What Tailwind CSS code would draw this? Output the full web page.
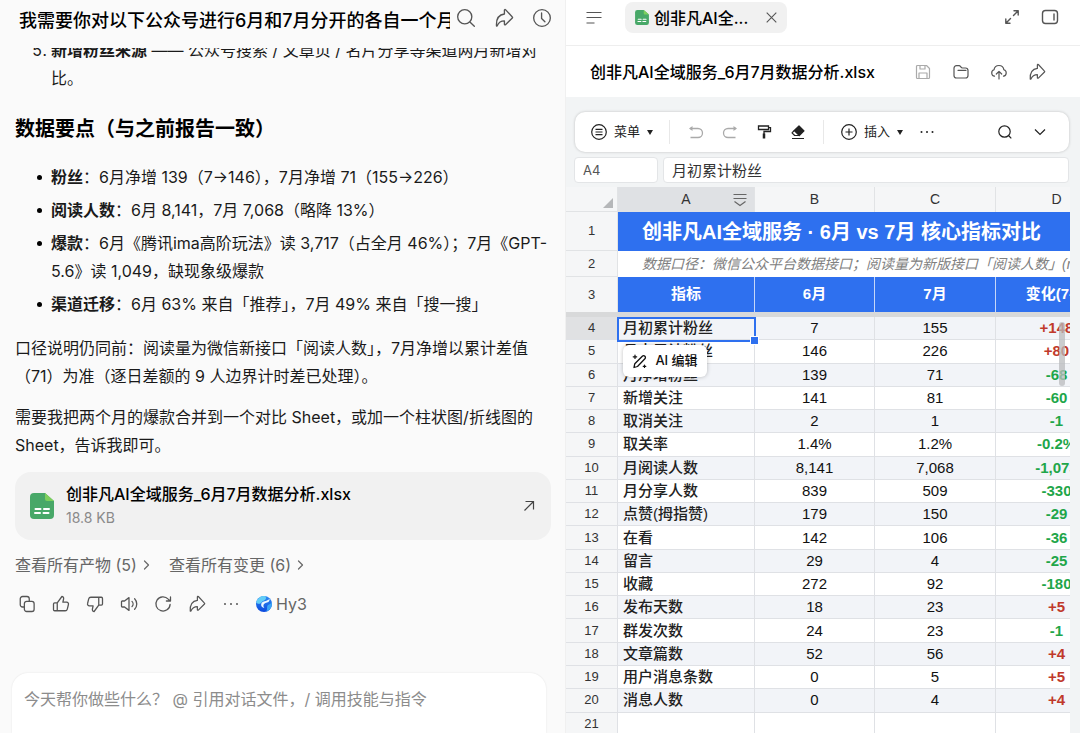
<!DOCTYPE html>
<html lang="zh-CN">
<head>
    <meta charset="UTF-8">
    <meta name="viewport" content="width=device-width, initial-scale=1.0">
    <title>创非凡AI全域服务_6月7月数据分析.xlsx</title>
    <script src="https://cdn.jsdelivr.net/npm/@tailwindcss/browser@4"></script>
</head>
<body class="font-['Inter','Noto_Sans_CJK_SC',sans-serif] text-[#1a1a1a] bg-[#fafafa]">
    <!-- 公用图标 -->
    <svg class="hidden" aria-hidden="true">
        <symbol id="i-share" viewBox="0 0 24 24" fill="none" stroke="currentColor" stroke-width="1.6" stroke-linecap="round" stroke-linejoin="round"><path d="M12.500 2.500v4.700C6 8 2.500 13 3 21.500c.3 .3 .7 .2 .9-.2 1.700-4 4.300-5.800 8.600-5.800v4c0 .7 .8 1 1.300 .6L22 12c.4-.4 .4-.8 0-1.200L13.800 2c-.5-.5-1.300-.2-1.300 .5z"/></symbol>
        <symbol id="i-search" viewBox="0 0 24 24" fill="none" stroke="currentColor" stroke-width="1.6" stroke-linecap="round"><circle cx="10.500" cy="10.500" r="8.500"/><path d="M17 17l5 5"/></symbol>
        <symbol id="i-right" viewBox="0 0 24 24" fill="none" stroke="currentColor" stroke-width="2.400" stroke-linecap="round" stroke-linejoin="round"><path d="M7 4l8 8-8 8"/></symbol>
        <symbol id="i-sheet" viewBox="0 0 24 26"><path d="M4 0h11l9 8v14a4 4 0 0 1-4 4H4a4 4 0 0 1-4-4V4a4 4 0 0 1 4-4z" fill="#48a868"/><path d="M15 0l9 8h-7a2 2 0 0 1-2-2z" fill="#7dd05c"/><path d="M5.500 16h5M14 16h5M5 20h5M13.500 20h5" stroke="#fff" stroke-width="2" stroke-linecap="round"/></symbol>
    </svg>

    <div class="h-screen grid grid-cols-[565fr_515fr] overflow-hidden">
        <!-- 左侧对话 -->
        <main class="flex flex-col min-w-0 overflow-hidden">
            <header class="h-12 shrink-0 flex items-start pt-1 pl-[19px] pr-[13px]">
                <h1 class="flex-1 min-w-0 overflow-hidden whitespace-nowrap text-[18px] leading-[34px] font-medium text-black">我需要你对以下公众号进行6月和7月分开的各自一个月数据分析</h1>
                <div class="flex gap-[18px] pl-[6px] pt-1 text-[#555]">
                    <button aria-label="搜索"><svg class="size-5"><use href="#i-search"/></svg></button>
                    <button aria-label="分享"><svg class="size-5"><use href="#i-share"/></svg></button>
                    <button aria-label="历史"><svg class="size-5" viewBox="0 0 24 24" fill="none" stroke="currentColor" stroke-width="1.6" stroke-linecap="round" stroke-linejoin="round"><circle cx="12" cy="12" r="10"/><path d="M11.500 6v6.500l4 4"/></svg></button>
                </div>
            </header>

            <section class="flex-1 min-h-0 overflow-hidden pl-[15px] pr-[14px] text-[16px] leading-[28px] whitespace-nowrap">
                <ol start="5" class="list-decimal pl-9 -mt-3">
                    <li><strong class="font-bold">新增粉丝来源</strong> —— 公众号搜索 / 文章页 / 名片分享等渠道两月新增对<br>比。</li>
                </ol>
                <h2 class="mt-[23px] text-[20px] font-bold text-black">数据要点（与之前报告一致）</h2>
                <ul class="mt-5 pl-9 flex flex-col gap-[5px]">
                    <li class="relative before:absolute before:-left-[14px] before:top-[12px] before:size-[5px] before:rounded-full before:bg-black"><strong class="font-bold">粉丝</strong>：6月净增 139（7→146），7月净增 71（155→226）</li>
                    <li class="relative before:absolute before:-left-[14px] before:top-[12px] before:size-[5px] before:rounded-full before:bg-black"><strong class="font-bold">阅读人数</strong>：6月 8,141，7月 7,068（略降 13%）</li>
                    <li class="relative before:absolute before:-left-[14px] before:top-[12px] before:size-[5px] before:rounded-full before:bg-black"><strong class="font-bold">爆款</strong>：6月《腾讯ima高阶玩法》读 3,717（占全月 46%）；7月《GPT-<br>5.6》读 1,049，缺现象级爆款</li>
                    <li class="relative before:absolute before:-left-[14px] before:top-[12px] before:size-[5px] before:rounded-full before:bg-black"><strong class="font-bold">渠道迁移</strong>：6月 63% 来自「推荐」，7月 49% 来自「搜一搜」</li>
                </ul>
                <p class="mt-4">口径说明仍同前：阅读量为微信新接口「阅读人数」，7月净增以累计差值<br>（71）为准（逐日差额的 9 人边界计时差已处理）。</p>
                <p class="mt-[13px]">需要我把两个月的爆款合并到一个对比 Sheet，或加一个柱状图/折线图的<br>Sheet，告诉我即可。</p>

                <a href="#" class="mt-[13px] h-[68px] rounded-2xl bg-[#f1f1f1] flex items-center pl-[15px] pr-4">
                    <svg class="w-6 h-[26px]"><use href="#i-sheet"/></svg>
                    <span class="flex-1 pl-3">
                        <span class="block font-medium text-black leading-6">创非凡AI全域服务_6月7月数据分析.xlsx</span>
                        <span class="block text-[14px] leading-6 text-[#8a8a8a]">18.8 KB</span>
                    </span>
                    <svg class="size-3" viewBox="0 0 12 12" fill="none" stroke="#444" stroke-width="1.200"><path d="M1.500 10.500L10.500 1.500M2.500 1.500h8v8"/></svg>
                </a>

                <div class="mt-[11px] flex gap-4 text-[#666]">
                    <button class="flex items-center gap-1">查看所有产物 (5)<svg class="size-3"><use href="#i-right"/></svg></button>
                    <button class="flex items-center gap-1">查看所有变更 (6)<svg class="size-3"><use href="#i-right"/></svg></button>
                </div>

                <div class="mt-[11px] pl-[3px] flex items-center gap-4 text-[#555]">
                    <button aria-label="复制"><svg class="size-[18px]" viewBox="0 0 24 24" fill="none" stroke="currentColor" stroke-width="1.700" stroke-linejoin="round"><rect x="8.500" y="8.500" width="13" height="13.500" rx="3"/><path d="M8.500 16H6a3 3 0 0 1-3-3V5a3 3 0 0 1 3-3h6a3 3 0 0 1 3 3v3.500"/></svg></button>
                    <button aria-label="赞"><svg class="size-[18px]" viewBox="0 0 24 24" fill="none" stroke="currentColor" stroke-width="1.700" stroke-linejoin="round"><path d="M7 10.500H3.500A1.500 1.500 0 0 0 2 12v7.500A1.500 1.500 0 0 0 3.500 21H7M7 10.500V21h10.500a3 3 0 0 0 2.900-2.300l1.500-6A2.500 2.500 0 0 0 19.500 9.500H14.500l1-4.500c.3-1.500-.8-3-2.300-3L7 10.500z"/></svg></button>
                    <button aria-label="踩"><svg class="size-[18px]" viewBox="0 0 24 24" fill="none" stroke="currentColor" stroke-width="1.700" stroke-linejoin="round"><path d="M17 13.500h3.500A1.500 1.500 0 0 0 22 12V4.500A1.500 1.500 0 0 0 20.500 3H17M17 13.500V3H6.500a3 3 0 0 0-2.900 2.300l-1.500 6a2.500 2.500 0 0 0 2.400 3.200H9.500l-1 4.500c-.3 1.500.8 3 2.300 3l6.200-8.500z"/></svg></button>
                    <button aria-label="朗读"><svg class="size-[18px]" viewBox="0 0 24 24" fill="none" stroke="currentColor" stroke-width="1.700" stroke-linecap="round" stroke-linejoin="round"><path d="M2 9v6a1 1 0 0 0 1 1h3l6 4.500v-17L6 8H3a1 1 0 0 0-1 1zM16 8.500a5 5 0 0 1 0 7M19.500 5a10 10 0 0 1 0 14"/></svg></button>
                    <button aria-label="重新生成"><svg class="size-[18px]" viewBox="0 0 24 24" fill="none" stroke="currentColor" stroke-width="1.700" stroke-linecap="round" stroke-linejoin="round"><path d="M21.500 12.500A9.500 9.500 0 1 1 19 5.500l2.500 2.500M22 2.500V8h-5.500"/></svg></button>
                    <button aria-label="转发"><svg class="size-[18px]"><use href="#i-share"/></svg></button>
                    <button aria-label="更多"><svg class="size-[18px]" viewBox="0 0 24 24" fill="currentColor"><circle cx="4" cy="12" r="1.300"/><circle cx="12" cy="12" r="1.300"/><circle cx="20" cy="12" r="1.300"/></svg></button>
                    <span class="flex items-center gap-1 text-[#666]">
                        <svg class="size-4" viewBox="0 0 16 16">
                            <defs><linearGradient id="hy" x1="0" y1="0" x2="0" y2="1"><stop offset="0" stop-color="#2f8df3"/><stop offset="1" stop-color="#0a47dd"/></linearGradient></defs>
                            <circle cx="8" cy="8" r="8" fill="url(#hy)"/>
                            <path d="M8.500 0A8 8 0 0 0 .2 6.500C1.500 8 4 8.500 5.500 6.500 6.800 4.500 9.500 4.500 10 2.500 10.200 1.300 9.500.4 8.500 0z" fill="#62cdf6"/>
                            <path d="M13.500 2.500C14 6 11.500 6.500 9.500 7 7 7.800 7 10.500 8.500 12c-3-.3-4.300-3.300-2.500-5.500C7.800 4.500 12 5.500 13.500 2.500z" fill="#eaf8ff"/>
                            <path d="M15.800 6.500c-1.300 2-3.300 1.500-4.300 3-1 1.700.3 3.800-1.500 6.200A8 8 0 0 0 15.800 6.500z" fill="#3aa5f5"/>
                        </svg>
                        Hy3
                    </span>
                </div>
            </section>

            <div class="ml-3 mr-[19px] h-[60px] shrink-0 bg-white rounded-t-2xl shadow-[0_0_2px_rgba(0,0,0,0.1)] px-3 pt-3">
                <input type="text" aria-label="输入消息" placeholder="今天帮你做些什么？ @ 引用对话文件，/ 调用技能与指令" class="w-full h-7 text-[16px] placeholder:text-[#8c8c8c] outline-none">
            </div>
        </main>

        <!-- 右侧表格 -->
        <aside class="flex flex-col min-w-0 overflow-hidden bg-[#f2f4f5] border-l border-[#f0f0f0]">
            <div class="h-[46px] shrink-0 bg-white border-b border-[#eee] flex items-start pt-[2px] pl-5 pr-[21px] text-[#555]">
                <button aria-label="目录" class="mt-2"><svg class="w-4 h-4" viewBox="0 0 16 16" stroke="currentColor" stroke-width="1.200"><path d="M.5 2.500h15M.5 7.500h15M.5 13h8"/></svg></button>
                <div class="ml-[23px] w-[162px] h-[31px] rounded-lg bg-[#f1f1f1] flex items-center px-[10px]">
                    <svg class="w-[14px] h-[15px]"><use href="#i-sheet"/></svg>
                    <span class="flex-1 pl-[5px] whitespace-nowrap text-[16px] font-medium text-black">创非凡AI全...</span>
                    <button aria-label="关闭"><svg class="size-[11px]" viewBox="0 0 11 11" stroke="currentColor" stroke-width="1.100"><path d="M.7.7l9.600 9.600M10.300.7L.7 10.300"/></svg></button>
                </div>
                <div class="ml-auto mt-[6px] flex gap-5">
                    <button aria-label="放大"><svg class="size-[18px]" viewBox="0 0 18 18" fill="none" stroke="currentColor" stroke-width="1.400" stroke-linecap="round" stroke-linejoin="round"><path d="M10.500 7.500L15.200 2.800M11 2.800h4.200V7M7.500 10.500l-4.700 4.700M2.800 11v4.200H7"/></svg></button>
                    <button aria-label="侧栏"><svg class="size-[18px]" viewBox="0 0 18 18" fill="none" stroke="currentColor" stroke-width="1.400" stroke-linecap="round"><rect x="1.500" y="2.500" width="15" height="13" rx="3"/><path d="M13 6v6"/></svg></button>
                </div>
            </div>

            <div class="h-[51px] shrink-0 bg-white flex items-center pl-6 pr-[34px] text-[#555]">
                <h2 class="flex-1 whitespace-nowrap text-[16px] font-medium text-black">创非凡AI全域服务_6月7月数据分析.xlsx</h2>
                <div class="flex gap-5">
                    <button aria-label="保存" class="text-[#aaa]"><svg class="size-[18px]" viewBox="0 0 18 18" fill="none" stroke="currentColor" stroke-width="1.200" stroke-linejoin="round"><path d="M3.500 2.500h9l3 3v9a1 1 0 0 1-1 1h-11a1 1 0 0 1-1-1v-11a1 1 0 0 1 1-1zM6 2.500v3.500h5V2.500M5 15.500V10h8v5.500"/></svg></button>
                    <button aria-label="文件夹"><svg class="size-[18px]" viewBox="0 0 18 18" fill="none" stroke="currentColor" stroke-width="1.200" stroke-linejoin="round" stroke-linecap="round"><path d="M4.500 2.700h2.700c1.300 0 1.500 2.300 3.300 2.300h3a2.500 2.500 0 0 1 2.500 2.500v5a2.500 2.500 0 0 1-2.500 2.500h-9A2.500 2.500 0 0 1 2 12.500v-7.300a2.500 2.500 0 0 1 2.500-2.500zM6 7.300h8"/></svg></button>
                    <button aria-label="上传"><svg class="size-[18px]" viewBox="0 0 18 18" fill="none" stroke="currentColor" stroke-width="1.200" stroke-linecap="round" stroke-linejoin="round"><path d="M4.500 13.200A3.300 3.300 0 0 1 4 6.800a5 5 0 0 1 9.900 0 3.300 3.300 0 0 1-.4 6.400M9 16V8.500M6.300 11L9 8.300l2.700 2.700"/></svg></button>
                    <button aria-label="分享"><svg class="size-[18px]"><use href="#i-share"/></svg></button>
                </div>
            </div>

            <div class="mt-[15px] ml-[9px] mr-[11px] h-10 shrink-0 bg-white rounded-[10px] shadow-[0_0_3px_rgba(0,0,0,0.22)] flex items-center pl-4 pr-[23px] text-[13px] text-[#222]">
                <button class="flex items-center gap-[7px]">
                    <svg class="size-4" viewBox="0 0 16 16" fill="none" stroke="currentColor" stroke-width="1.200"><circle cx="8" cy="8" r="7.300"/><path d="M4.500 5.300h7M4.500 8h7M4.500 10.700h7"/></svg>
                    菜单
                    <svg class="w-[6px] h-[5px]" viewBox="0 0 6 5" fill="currentColor"><path d="M0 0h6L3 5z"/></svg>
                </button>
                <span class="w-px h-6 bg-[#e8e8e8] ml-4 mr-[18px]"></span>
                <div class="flex gap-[18px]">
                    <button aria-label="撤销" class="text-[#aaa]"><svg class="size-4" viewBox="0 0 16 16" fill="none" stroke="currentColor" stroke-width="1.300"><path d="M2 4.500h8a4.500 4.500 0 0 1 0 9H2.500"/><path d="M4.500 2v5L1 4.500z" fill="currentColor" stroke="none"/></svg></button>
                    <button aria-label="重做" class="text-[#aaa]"><svg class="size-4" viewBox="0 0 16 16" fill="none" stroke="currentColor" stroke-width="1.300"><path d="M14 4.500H6a4.500 4.500 0 0 0 0 9h7.500"/><path d="M11.500 2v5L15 4.500z" fill="currentColor" stroke="none"/></svg></button>
                    <button aria-label="格式刷"><svg class="size-4" viewBox="0 0 16 16" fill="none" stroke="currentColor" stroke-width="1.300"><path d="M2.500 2h10v3.500h-10zM12.500 3.700h2V7.500H8v2.500"/><path d="M8 9.500v5" stroke-width="2.500"/></svg></button>
                    <button aria-label="清除"><svg class="size-4" viewBox="0 0 16 16" fill="none" stroke="currentColor" stroke-width="1.200" stroke-linejoin="round"><path d="M9 1.800l5 5-4.700 4.700-5-5z" fill="currentColor"/><path d="M4.300 6.500L2 8.800l2.700 2.700h4.600M2 14.500h12"/></svg></button>
                </div>
                <span class="w-px h-6 bg-[#e8e8e8] mx-[17px]"></span>
                <button class="flex items-center gap-[7px]">
                    <svg class="size-4" viewBox="0 0 16 16" fill="none" stroke="currentColor" stroke-width="1.200"><circle cx="8" cy="8" r="7.300"/><path d="M4.500 8h7M8 4.500v7"/></svg>
                    插入
                    <svg class="w-[6px] h-[5px]" viewBox="0 0 6 5" fill="currentColor"><path d="M0 0h6L3 5z"/></svg>
                </button>
                <button aria-label="更多" class="ml-4"><svg class="size-4" viewBox="0 0 16 16" fill="currentColor"><circle cx="2.500" cy="8" r="1"/><circle cx="8" cy="8" r="1"/><circle cx="13.500" cy="8" r="1"/></svg></button>
                <button aria-label="查找" class="ml-auto"><svg class="size-4" viewBox="0 0 16 16" fill="none" stroke="currentColor" stroke-width="1.200"><circle cx="7.500" cy="7.500" r="5.700"/><path d="M11.500 11.500l2.800 2.800"/></svg></button>
                <button aria-label="展开" class="ml-[21px]"><svg class="w-3 h-4" viewBox="0 0 12 16" fill="none" stroke="currentColor" stroke-width="1.200"><path d="M1 5.500l5 5 5-5"/></svg></button>
            </div>

            <div class="mt-[5px] ml-2 mr-[11px] shrink-0 flex gap-[5px] text-[#333]">
                <input type="text" aria-label="单元格" value="A4" class="w-[84px] h-[26px] bg-white border border-[#e3e5e7] rounded px-2 text-[13px] text-[#555]">
                <input type="text" aria-label="编辑栏" value="月初累计粉丝" class="flex-1 min-w-0 h-[26px] bg-white border border-[#e3e5e7] rounded px-2 pb-[2px] text-[15px]">
            </div>

            <div class="relative mt-[4px] mr-[10px] flex-1 min-h-0 flex flex-col overflow-hidden font-['Liberation_Sans','Noto_Sans_CJK_SC',sans-serif] text-[15px] whitespace-nowrap bg-white">
                <!-- 冻结行 -->
                <table class="w-[551px] table-fixed border-separate border-spacing-0">
                    <colgroup><col class="w-[52px]"><col class="w-[137px]"><col class="w-[120px]"><col class="w-[121px]"><col class="w-[121px]"></colgroup>
                    <tr class="h-[25px] text-[#333] bg-[#f5f6f7]">
                        <th class="p-0 border-r border-b border-[#e1e3e5]"><svg class="ml-auto mt-2 mr-1 size-[10px]" viewBox="0 0 10 10"><path d="M10 0v10H0z" fill="#b5b7b9"/></svg></th>
                        <th class="p-0 border-r border-[#e1e3e5] font-normal text-[14px] bg-[#dfe1e4]">
                            <div class="relative">A
                                <svg class="absolute right-[7px] top-1 w-[14px] h-[14px]" viewBox="0 0 14 14" fill="none" stroke="#666" stroke-width="1.200"><path d="M.5 1.500h13M.5 5.500h13M1.500 8.500L7 12.500l5.500-4"/></svg>
                            </div>
                        </th>
                        <th class="p-0 border-r border-[#e1e3e5] font-normal text-[14px]">B</th>
                        <th class="p-0 border-r border-[#e1e3e5] font-normal text-[14px]">C</th>
                        <th class="p-0 font-normal text-[14px]">D</th>
                    </tr>
                    <tr class="h-[39px]">
                        <th class="p-0 border-r border-b border-[#e1e3e5] bg-[#f5f6f7] text-[13px] font-normal text-[#333]">1</th>
                        <td colspan="4" class="p-0 pl-6 bg-[#2e70ef] text-white text-[20px] font-bold">创非凡AI全域服务 · 6月 vs 7月 核心指标对比</td>
                    </tr>
                    <tr class="h-[26px]">
                        <th class="p-0 border-r border-b border-[#e1e3e5] bg-[#f5f6f7] text-[13px] font-normal text-[#333]">2</th>
                        <td colspan="4" class="p-0 pl-6 text-[14px] italic text-[#808080] overflow-hidden">数据口径：微信公众平台数据接口；阅读量为新版接口「阅读人数」(read)</td>
                    </tr>
                    <tr class="h-[35px] text-white">
                        <th class="p-0 border-r border-[#e1e3e5] bg-[#f5f6f7] text-[13px] font-normal text-[#333]">3</th>
                        <th class="p-0 bg-[#2e70ef] border-r border-[#c5d6f8]">指标</th>
                        <th class="p-0 bg-[#2e70ef] border-r border-[#c5d6f8]">6月</th>
                        <th class="p-0 bg-[#2e70ef] border-r border-[#c5d6f8]">7月</th>
                        <th class="p-0 bg-[#2e70ef]">变化(7-6)</th>
                    </tr>
                </table>
                <div class="h-[5px] shrink-0 bg-[#d8d9da]"></div>

                <div class="flex-1 min-h-0 -mb-[3px]">
                    <table class="w-[551px] h-full table-fixed border-separate border-spacing-0 leading-5">
                        <colgroup><col class="w-[52px]"><col class="w-[137px]"><col class="w-[120px]"><col class="w-[121px]"><col class="w-[121px]"></colgroup>
                        <tbody id="sheetBody"></tbody>
                    </table>
                </div>

                <!-- 选中框、浮动按钮、滚动条 -->
                <div class="absolute left-[51px] top-[130px] w-[139px] h-[25px] border-2 border-[#2e70ef]">
                    <span class="absolute -right-1 -bottom-1 size-[7px] bg-[#2e70ef] outline outline-white"></span>
                </div>
                <button class="absolute left-[57px] top-[158px] h-8 w-[84px] rounded-md bg-white shadow-[0_0_4px_rgba(0,0,0,0.25)] flex items-center justify-center gap-2 font-['Inter','Noto_Sans_CJK_SC',sans-serif] text-[13px] font-medium text-[#111]">
                    <svg class="size-[15px]" viewBox="0 0 15 15" fill="none" stroke="currentColor" stroke-width="1.300" stroke-linejoin="round" stroke-linecap="round"><path d="M2 13.500l.8-3.800 7.500-7.500a1.800 1.800 0 0 1 2.600 2.600L5.500 12.500z"/><path d="M3 1v3.500M1.200 2.800h3.500M12.500 11v2.500M11.200 12.300h2.600" stroke-width="1.200"/></svg>
                    AI 编辑
                </button>
                <div class="absolute right-[5px] top-[135px] w-[6px] h-16 rounded-full bg-[#b9bbbe]/75"></div>
            </div>
        </aside>
    </div>

    <script>
    const rows = [
        ['月初累计粉丝', '7', '155', '+148'],
        ['月末累计粉丝', '146', '226', '+80'],
        ['月净增粉丝', '139', '71', '-68'],
        ['新增关注', '141', '81', '-60'],
        ['取消关注', '2', '1', '-1'],
        ['取关率', '1.4%', '1.2%', '-0.2%'],
        ['月阅读人数', '8,141', '7,068', '-1,073'],
        ['月分享人数', '839', '509', '-330'],
        ['点赞(拇指赞)', '179', '150', '-29'],
        ['在看', '142', '106', '-36'],
        ['留言', '29', '4', '-25'],
        ['收藏', '272', '92', '-180'],
        ['发布天数', '18', '23', '+5'],
        ['群发次数', '24', '23', '-1'],
        ['文章篇数', '52', '56', '+4'],
        ['用户消息条数', '0', '5', '+5'],
        ['消息人数', '0', '4', '+4'],
        ['', '', '', '']
    ];

    // 渲染数据行
    const body = document.getElementById('sheetBody');
    rows.forEach((r, i) => {
        const tr = document.createElement('tr');
        tr.className = i % 2 === 0 && i < 17 ? 'bg-[#f2f4f8]' : 'bg-white';
        const head = i === 0 ? 'bg-[#e0e1e3]' : 'bg-[#f5f6f7]';
        const color = r[3].startsWith('+') ? 'text-[#c0392b]' : 'text-[#1fa64a]';
        tr.innerHTML = `
            <th class="p-0 border-r border-b border-[#dfe1e5] text-[13px] font-normal text-[#333] ${head}">${i + 4}</th>
            <td class="p-0 pl-[5px] border-r border-b border-[#dfe1e5] font-medium text-[#222]">${r[0]}</td>
            <td class="p-0 border-r border-b border-[#dfe1e5] text-center text-[#111]">${r[1]}</td>
            <td class="p-0 border-r border-b border-[#dfe1e5] text-center text-[#111]">${r[2]}</td>
            <td class="p-0 border-b border-[#dfe1e5] text-center font-bold ${color}">${r[3]}</td>
        `;
        body.appendChild(tr);
    });
    </script>
</body>
</html>
